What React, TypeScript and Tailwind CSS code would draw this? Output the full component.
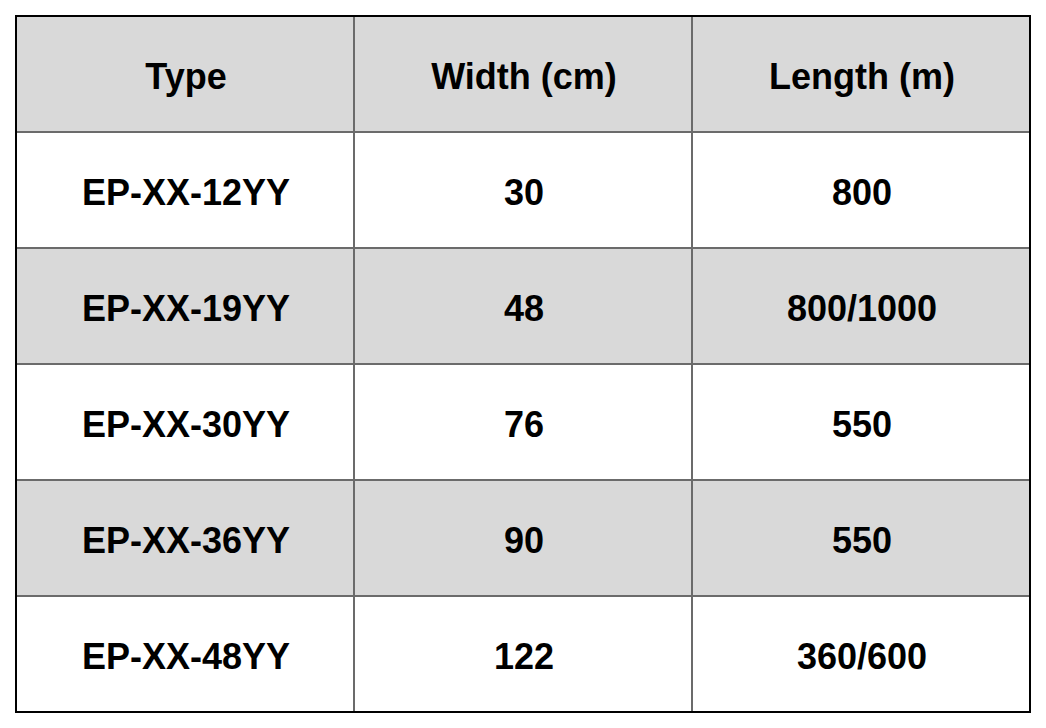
const header = ["Type", "Width (cm)", "Length (m)"];

const rows = [
  ["EP-XX-12YY", "30", "800"],
  ["EP-XX-19YY", "48", "800/1000"],
  ["EP-XX-30YY", "76", "550"],
  ["EP-XX-36YY", "90", "550"],
  ["EP-XX-48YY", "122", "360/600"],
];

const Cell = ({ text, shaded }: { text: string; shaded: boolean }) => (
  <div
    className={`flex h-[114px] items-center justify-center pt-[5px] pl-[2px] text-[36px] font-bold text-black ${
      shaded ? "bg-[#d9d9d9]" : "bg-white"
    }`}
  >
    {text}
  </div>
);

export default function App() {
  return (
    <div
      className="min-h-screen bg-white p-[15px]"
      style={{ fontFamily: '"Liberation Sans", Arial, sans-serif' }}
    >
      <div className="w-[1016px] border-2 border-black bg-[#6b6b6b]">
        <div className="grid grid-cols-3 gap-[2px]">
          {header.map((h) => (
            <Cell key={h} text={h} shaded />
          ))}
          {rows.map((row, i) =>
            row.map((c, j) => <Cell key={`${i}-${j}`} text={c} shaded={i % 2 === 1} />)
          )}
        </div>
      </div>
    </div>
  );
}
